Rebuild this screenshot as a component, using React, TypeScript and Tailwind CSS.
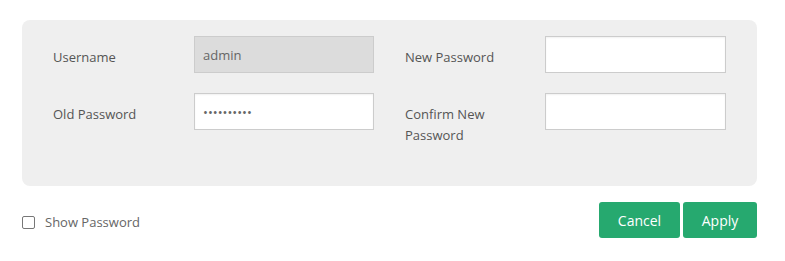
import React, { useState } from 'react';

const FONT = { fontFamily: '"Open Sans", "Liberation Sans", sans-serif' };

function Field({
  label,
  value,
  type = 'text',
  disabled = false,
  narrow = false,
}: {
  label: string;
  value: string;
  type?: string;
  disabled?: boolean;
  narrow?: boolean;
}) {
  return (
    <div className="flex items-start">
      <label
        className={
          (narrow ? 'w-[140px]' : 'w-[141px]') +
          ' shrink-0 pt-[11px] pr-[40px] text-[13px] leading-[21px] text-[#555]'
        }
      >
        {label}
      </label>
      <input
        type={type}
        defaultValue={value}
        disabled={disabled}
        className={
          'h-[37px] border border-[#cccccc] px-[8px] text-[13px] text-[#666] outline-none ' +
          (narrow ? 'w-[181px] ' : 'w-[180px] ') +
          (disabled ? 'bg-[#dcdcdc]' : 'bg-white shadow-[inset_0_1px_2px_rgba(0,0,0,0.06)]')
        }
        style={FONT}
      />
    </div>
  );
}

export default function App() {
  const [show, setShow] = useState(false);

  return (
    <div className="min-h-[261px] bg-white pl-[22px] pr-[28px] pt-[20px]" style={FONT}>
      {/* Form panel */}
      <div className="rounded-[8px] bg-[#efefef] pl-[31px] pr-[31px] pt-[16px] pb-[40px]">
        <div className="grid grid-cols-[321px_321px] gap-x-[31px] gap-y-[20px]">
          <Field label="Username" value="admin" disabled />
          <Field label="New Password" value="" type={show ? 'text' : 'password'} narrow />
          <Field label="Old Password" value="0123456789" type={show ? 'text' : 'password'} />
          <Field label="Confirm New Password" value="" type={show ? 'text' : 'password'} narrow />
        </div>
      </div>

      {/* Footer */}
      <div className="mt-[16px] flex items-center justify-between">
        <label className="mt-[5px] flex items-center gap-[10px] text-[13px] text-[#666]">
          <input
            type="checkbox"
            checked={show}
            onChange={(e) => setShow(e.target.checked)}
            className="m-0 h-[13px] w-[13px] appearance-none rounded-[2px] border border-[#777] bg-white"
          />
          Show Password
        </label>
        <div className="flex gap-[3px]">
          <button className="h-[36px] w-[81px] rounded-[3px] bg-[#26a96f] text-[14px] text-white">
            Cancel
          </button>
          <button className="h-[36px] w-[74px] rounded-[3px] bg-[#26a96f] text-[14px] text-white">
            Apply
          </button>
        </div>
      </div>
    </div>
  );
}
